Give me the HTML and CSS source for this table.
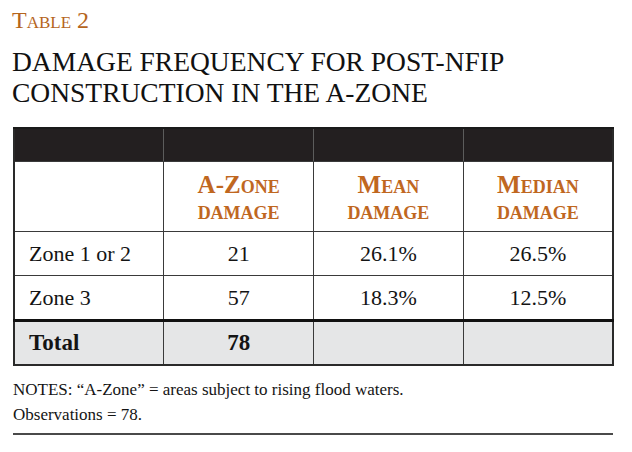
FILE: index.html
```html
<!DOCTYPE html>
<html>
<head>
<meta charset="utf-8">
<link rel="stylesheet" href="styles.css">
</head>
<body>
<div class="page">
  <div class="label">Table 2</div>
  <h1 class="title">DAMAGE FREQUENCY FOR POST-NFIP<br>CONSTRUCTION IN THE A-ZONE</h1>
  <table class="data">
    <colgroup>
      <col class="c"><col class="c"><col class="c"><col class="c">
    </colgroup>
    <tr class="dark">
      <td></td><td></td><td></td><td></td>
    </tr>
    <tr class="head">
      <td></td>
      <td>A-Zone<br>damage</td>
      <td>Mean<br>damage</td>
      <td>Median<br>damage</td>
    </tr>
    <tr class="row">
      <td class="name">Zone 1 or 2</td>
      <td>21</td>
      <td>26.1%</td>
      <td>26.5%</td>
    </tr>
    <tr class="row">
      <td class="name">Zone 3</td>
      <td>57</td>
      <td>18.3%</td>
      <td>12.5%</td>
    </tr>
    <tr class="total">
      <td class="name">Total</td>
      <td>78</td>
      <td></td>
      <td></td>
    </tr>
  </table>
  <div class="notes">NOTES: “A-Zone” = areas subject to rising flood waters.<br>Observations = 78.</div>
  <div class="rule"></div>
</div>
</body>
</html>
```

FILE: styles.css
```css
html, body {
  margin: 0;
  padding: 0;
  background: #ffffff;
}

.page {
  width: 601px;
  padding: 6px 0 0 13px;
  font-family: "Liberation Serif", "Times New Roman", serif;
  color: #141414;
}

.label {
  font-size: 24px;
  line-height: 28px;
  font-variant: small-caps;
  color: #b5651d;
  margin-left: -1px;
}

.title {
  margin: 12px 0 0 -1px;
  font-size: 27.5px;
  line-height: 31px;
  font-weight: normal;
  color: #111111;
}

.data {
  margin-top: 19px;
  width: 601px;
  border-collapse: collapse;
  table-layout: fixed;
  border: 2px solid #2a2a2a;
}

.data .c {
  width: 25%;
}

.data td {
  padding: 0;
  border: 1px solid #3a3a3a;
  text-align: center;
  vertical-align: middle;
  font-size: 22px;
}

.dark td {
  height: 32px;
  background: #231f20;
  border-left-color: #5c5c5c;
  border-right-color: #5c5c5c;
  border-top: 2px solid #1a1a1a;
}

.head td {
  height: 66px;
  font-size: 25px;
  line-height: 26px;
  font-weight: bold;
  font-variant: small-caps;
  color: #c0671f;
  padding-top: 3px;
}

.row td {
  height: 42px;
  padding-top: 1px;
}

.data td.name {
  text-align: left;
  padding-left: 14px;
}

.total td {
  height: 42px;
  background: #e5e6e7;
  border-top: 3px solid #111111;
  font-weight: bold;
  font-size: 23px;
}

.notes {
  margin-top: 11px;
  font-size: 17px;
  line-height: 25px;
  color: #141414;
}

.rule {
  margin-top: 6px;
  width: 600px;
  height: 2px;
  background: #4a4a4a;
}
```
